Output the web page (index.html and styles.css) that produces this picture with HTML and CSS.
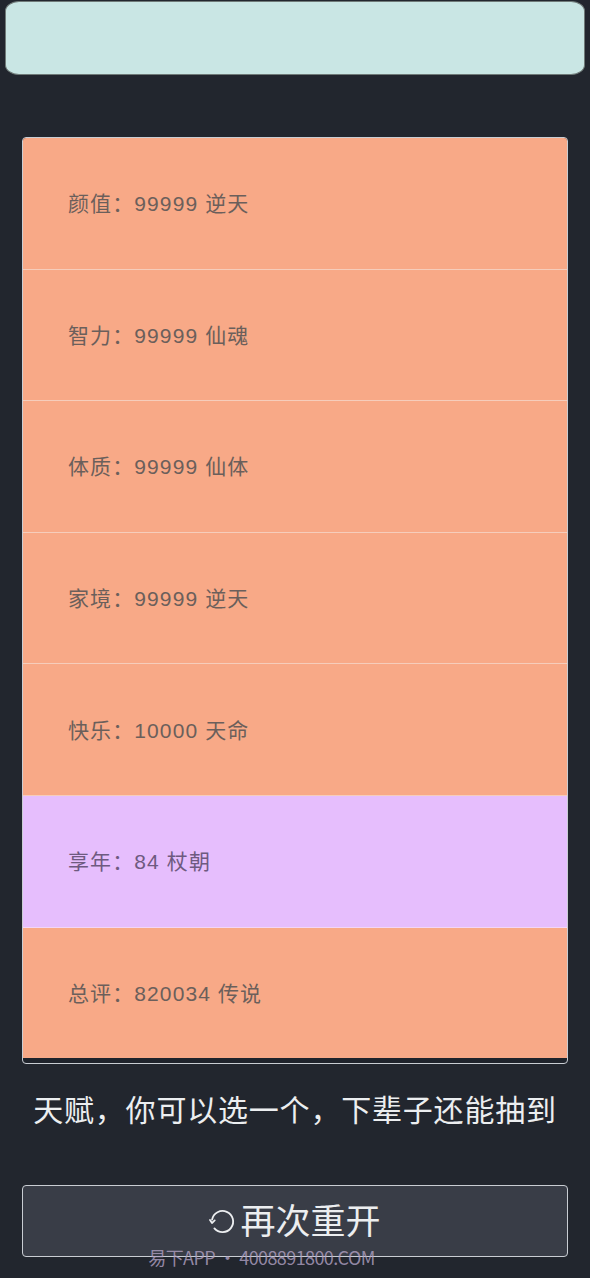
FILE: index.html
```html
<!DOCTYPE html>
<html lang="zh">
<head>
<meta charset="utf-8">
<title>人生重开</title>
<link rel="stylesheet" href="styles.css">
</head>
<body>
<div class="page">
  <div class="topbar"></div>
  <div class="card">
    <div class="row">颜值：99999 逆天</div>
    <div class="row">智力：99999 仙魂</div>
    <div class="row">体质：99999 仙体</div>
    <div class="row">家境：99999 逆天</div>
    <div class="row">快乐：10000 天命</div>
    <div class="row purple">享年：84 杖朝</div>
    <div class="row">总评：820034 传说</div>
  </div>
  <div class="hint">天赋，你可以选一个，下辈子还能抽到</div>
  <button class="restart">
    <svg class="icon" viewBox="0 0 28 28" width="27" height="27" aria-hidden="true">
      <path d="M3.2 12.1 A11 11 0 1 1 5.6 21.1" fill="none" stroke="#eceef0" stroke-width="1.9" stroke-linecap="round"/>
      <path d="M1 12.4 L3.1 15.6 L5.9 12.9" fill="none" stroke="#eceef0" stroke-width="1.8" stroke-linecap="round" stroke-linejoin="round"/>
    </svg>
    <span>再次重开</span>
  </button>
  <div class="watermark">易下APP • 4008891800.COM</div>
</div>
</body>
</html>
```
FILE: styles.css
```css
html, body {
  margin: 0;
  padding: 0;
  background: #22262e;
}
body {
  font-family: "Noto Sans CJK SC", "Noto Sans", sans-serif;
}
.page {
  position: relative;
  width: 590px;
  height: 1278px;
  box-sizing: border-box;
  padding-top: 1px;
  display: flex;
  flex-direction: column;
  align-items: center;
}
.topbar {
  width: 580px;
  height: 74px;
  box-sizing: border-box;
  background: #c9e6e4;
  border: 1px solid #6f7a78;
  border-radius: 14px / 10px;
}
.card {
  margin-top: 62px;
  width: 546px;
  height: 927px;
  box-sizing: border-box;
  border: 1px solid #c9cdd3;
  border-radius: 4px;
  background: #1f232b;
  overflow: hidden;
  display: flex;
  flex-direction: column;
}
.row {
  flex: none;
  height: 128.6px;
  padding-bottom: 2px;
  padding-left: 45px;
  border-bottom: 1px solid #f6cdbb;
  background: #f8a987;
  color: #6b5f5b;
  font-family: "Liberation Sans", "Noto Sans CJK SC", sans-serif;
  font-size: 21px;
  letter-spacing: 1.1px;
  display: flex;
  align-items: center;
}
.row.purple {
  background: #e6befd;
  color: #6e5a80;
  border-bottom-color: #f3d6f7;
}
.row:last-child {
  border-bottom: none;
}
.hint {
  margin-top: 22px;
  color: #eceef0;
  font-size: 30px;
  letter-spacing: 0.8px;
  line-height: 44px;
  text-align: center;
}
.restart {
  margin-top: 55px;
  width: 546px;
  height: 72px;
  box-sizing: border-box;
  background: #393d47;
  border: 1px solid #c9cdd3;
  border-radius: 4px;
  color: #eceef0;
  font-family: "Noto Sans CJK SC", sans-serif;
  font-size: 35px;
  display: flex;
  align-items: center;
  justify-content: center;
  gap: 4px;
  padding: 0 0 6px;
}
.restart span {
  line-height: 1;
}
.icon {
  margin-top: 6px;
}
.watermark {
  position: absolute;
  left: 0;
  right: 0;
  top: 1245px;
  padding-right: 67px;
  text-align: center;
  font-size: 18px;
  line-height: 24px;
  color: rgba(178, 162, 196, 0.8);
  font-family: "Noto Sans CJK SC", sans-serif;
  letter-spacing: -0.6px;
}
```
